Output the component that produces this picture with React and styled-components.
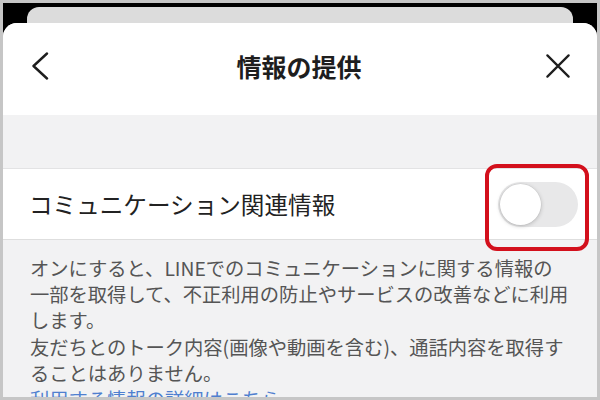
import React from 'react'
import styled, { createGlobalStyle } from 'styled-components'

const GlobalStyle = createGlobalStyle`
  html, body {
    margin: 0;
    padding: 0;
    background: #c6c6c6;
  }
  body {
    font-family: "Noto Sans CJK JP", "Noto Sans", sans-serif;
  }
`

const Frame = styled.div`
  width: 600px;
  height: 400px;
  box-sizing: border-box;
  padding: 3px;
  background: #c6c6c6;
`

const Screen = styled.div`
  height: 100%;
  display: flex;
  flex-direction: column;
  background: #000;
  overflow: hidden;
`

const BackCard = styled.div`
  flex: none;
  height: 16px;
  margin: 4px 24px 0;
  background: #dcdcdc;
  border-radius: 12px 12px 0 0;
`

const Sheet = styled.div`
  flex: 1;
  display: flex;
  flex-direction: column;
  background: #f2f2f3;
  border-radius: 14px 14px 0 0;
  overflow: hidden;
`

const Header = styled.header`
  flex: none;
  height: 92px;
  box-sizing: border-box;
  padding: 0 27px 6px 25px;
  display: flex;
  align-items: center;
  justify-content: space-between;
  background: #fff;
`

const Title = styled.h1`
  margin: 0;
  font-size: 25px;
  font-weight: 700;
  color: #1e1e1e;
  letter-spacing: 0;
`

const IconButton = styled.button`
  border: none;
  background: transparent;
  padding: 0;
  width: 24px;
  height: 28px;
  display: flex;
  align-items: center;
  justify-content: center;
  color: #1e1e1e;
`

const Band = styled.div`
  flex: none;
  height: 53px;
  background: #f2f2f3;
  border-bottom: 1px solid #e3e3e4;
`

const Row = styled.div`
  flex: none;
  height: 71px;
  box-sizing: border-box;
  padding: 0 19px 0 26px;
  display: flex;
  align-items: center;
  justify-content: space-between;
  background: #fff;
  border-bottom: 1px solid #dedede;
`

const Label = styled.span`
  font-size: 23.6px;
  color: #222;
`

const ToggleWrap = styled.div`
  position: relative;
  width: 80px;
  height: 45px;
`

const Track = styled.div`
  width: 100%;
  height: 100%;
  border-radius: 23px;
  background: ${(p) => (p.$on ? '#06c755' : '#e8e8e9')};
  display: flex;
  align-items: center;
  justify-content: ${(p) => (p.$on ? 'flex-end' : 'flex-start')};
  padding: 2px;
  box-sizing: border-box;
`

const Knob = styled.div`
  width: 41px;
  height: 41px;
  border-radius: 50%;
  background: #fff;
  box-shadow: 0 1px 4px rgba(0, 0, 0, 0.22), 0 0 0 0.5px rgba(0, 0, 0, 0.06);
`

const Highlight = styled.div`
  position: absolute;
  top: -18px;
  bottom: -24px;
  left: -13px;
  right: -11px;
  border: 4px solid #d3101c;
  border-radius: 12px;
  pointer-events: none;
`

const Description = styled.div`
  padding: 15px 20px 0 27px;
  font-size: 19.3px;
  line-height: 26.2px;
  color: #555;
  white-space: nowrap;
`

const Link = styled.a`
  color: #4f7fcf;
  text-decoration: none;
`

const ChevronLeft = () => (
  <svg width="18" height="28" viewBox="0 0 18 28" fill="none">
    <polyline
      points="16,1.5 2.5,14 16,26.5"
      stroke="currentColor"
      strokeWidth="2.4"
      strokeLinecap="round"
      strokeLinejoin="round"
    />
  </svg>
)

const CloseIcon = () => (
  <svg width="26" height="26" viewBox="0 0 26 26" fill="none">
    <path
      d="M1.5 1.5 L24.5 24.5 M24.5 1.5 L1.5 24.5"
      stroke="currentColor"
      strokeWidth="2.4"
      strokeLinecap="round"
    />
  </svg>
)

export default function App() {
  return (
    <>
      <GlobalStyle />
      <Frame>
        <Screen>
          <BackCard />
          <Sheet>
            <Header>
              <IconButton aria-label="戻る">
                <ChevronLeft />
              </IconButton>
              <Title>情報の提供</Title>
              <IconButton aria-label="閉じる">
                <CloseIcon />
              </IconButton>
            </Header>
            <Band />
            <Row>
              <Label>コミュニケーション関連情報</Label>
              <ToggleWrap>
                <Track $on={false}>
                  <Knob />
                </Track>
                <Highlight />
              </ToggleWrap>
            </Row>
            <Description>
              オンにすると、LINEでのコミュニケーションに関する情報の
              <br />
              一部を取得して、不正利用の防止やサービスの改善などに利用
              <br />
              します。
              <br />
              友だちとのトーク内容(画像や動画を含む)、通話内容を取得す
              <br />
              ることはありません。
              <br />
              <Link>利用する情報の詳細はこちら</Link>
            </Description>
          </Sheet>
        </Screen>
      </Frame>
    </>
  )
}
